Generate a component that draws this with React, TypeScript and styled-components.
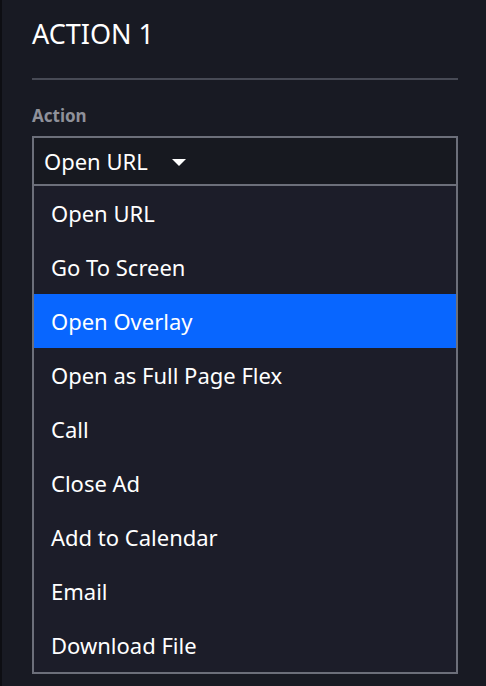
import styled, { createGlobalStyle } from "styled-components";

const GlobalStyle = createGlobalStyle`
  html, body {
    margin: 0;
    padding: 0;
    background: #181a23;
  }
  body {
    font-family: "Noto Sans", "Open Sans", sans-serif;
  }
`;

const ACTIONS = [
  "Open URL",
  "Go To Screen",
  "Open Overlay",
  "Open as Full Page Flex",
  "Call",
  "Close Ad",
  "Add to Calendar",
  "Email",
  "Download File",
];

const App = () => {
  const selected = "Open URL";
  const hovered = "Open Overlay";

  return (
    <>
      <GlobalStyle />
      <Panel>
        <Title>ACTION 1</Title>
        <Divider />

        {/* Action select, opened */}
        <Field>
          <Label>Action</Label>
          <SelectBox>
            <SelectValue>{selected}</SelectValue>
            <Caret />
          </SelectBox>
          <Menu>
            {ACTIONS.map((each) => (
              <MenuItem key={each} $active={each === hovered}>
                {each}
              </MenuItem>
            ))}
          </Menu>
        </Field>
      </Panel>
    </>
  );
};

export default App;

const Panel = styled.div`
  box-sizing: border-box;
  width: 486px;
  height: 686px;
  border-left: 2px solid #0d0e13;
  padding: 16px 28px 0 30px;
  color: #ffffff;
  overflow: hidden;
`;

const Title = styled.h1`
  margin: 0;
  font-size: 27px;
  font-weight: 400;
  line-height: 36px;
`;

const Divider = styled.hr`
  margin: 26px 0 0;
  border: none;
  height: 2px;
  background: #474a55;
`;

const Field = styled.div`
  display: flex;
  flex-direction: column;
  margin-top: 26px;
`;

const Label = styled.label`
  font-size: 17px;
  font-weight: 700;
  line-height: 20px;
  color: #8f919a;
  margin-bottom: 10px;
`;

const SelectBox = styled.div`
  display: flex;
  align-items: center;
  gap: 24px;
  height: 46px;
  padding: 0 10px;
  border: 2px solid #6c6f7a;
  border-bottom: none;
  background: #171920;
`;

const SelectValue = styled.span`
  font-size: 22px;
  line-height: 30px;
`;

const Caret = styled.span`
  width: 0;
  height: 0;
  margin-top: 3px;
  border-left: 7px solid transparent;
  border-right: 7px solid transparent;
  border-top: 7px solid #ffffff;
`;

const Menu = styled.ul`
  list-style: none;
  margin: 0;
  padding: 0;
  border: 2px solid #6c6f7a;
  background: #1c1d29;
`;

const MenuItem = styled.li<{ $active?: boolean }>`
  display: flex;
  align-items: center;
  height: 54px;
  padding: 0 17px;
  font-size: 22px;
  background: ${(p) => (p.$active ? "#0866ff" : "transparent")};
  color: #ffffff;
`;
